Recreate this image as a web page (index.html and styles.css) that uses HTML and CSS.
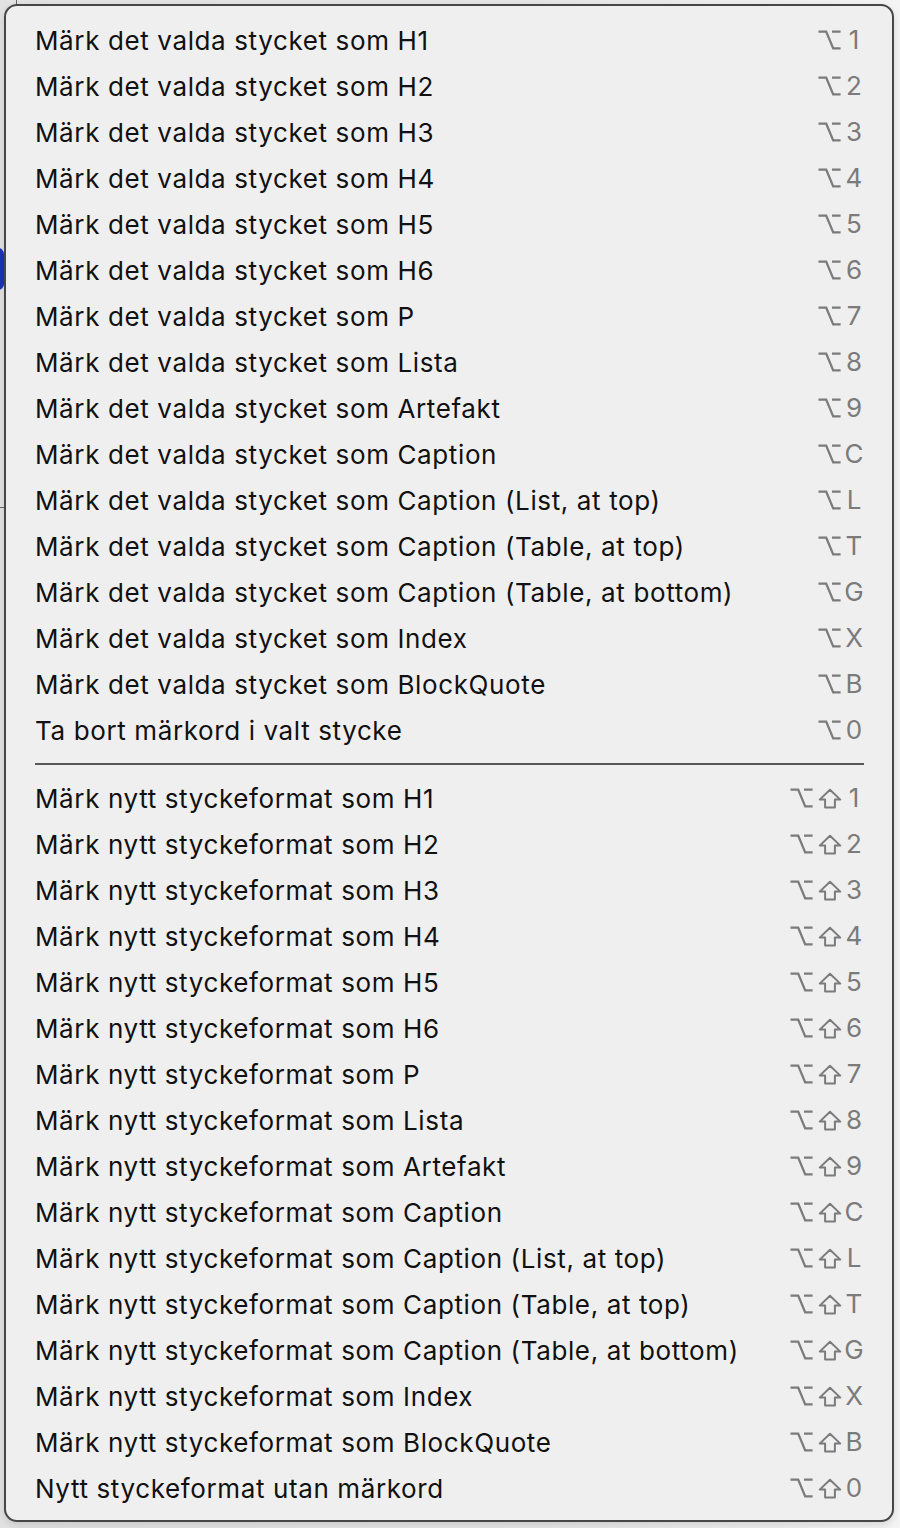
FILE: index.html
```html
<!DOCTYPE html>
<html lang="sv">
<head>
<meta charset="utf-8">
<title>Meny</title>
<link rel="stylesheet" href="styles.css">
</head>
<body>
<div class="backdrop">
  <span class="win-edge"></span>
  <span class="win-pill"></span>
  <span class="win-line"></span>
</div>
<div class="menu">
  <ul class="group" id="g1"></ul>
  <div class="sep"></div>
  <ul class="group" id="g2"></ul>
</div>
<template id="opt"><svg class="mod opt" viewBox="0 0 23 20" width="23" height="20"><path d="M0.5 1.6 H8.2 L15.2 18.4 H22.6 M14 1.6 H22.6" fill="none" stroke="currentColor" stroke-width="2.3"/></svg></template>
<template id="shift"><svg class="mod shift" viewBox="0 0 24 21" width="24" height="21"><path d="M12 1.8 L22.3 11.6 H16.9 V19.6 H7.1 V11.6 H1.7 Z" fill="none" stroke="currentColor" stroke-width="2" stroke-linejoin="round"/></svg></template>
<script>
const items1 = [
  ["Märk det valda stycket som H1","1"],
  ["Märk det valda stycket som H2","2"],
  ["Märk det valda stycket som H3","3"],
  ["Märk det valda stycket som H4","4"],
  ["Märk det valda stycket som H5","5"],
  ["Märk det valda stycket som H6","6"],
  ["Märk det valda stycket som P","7"],
  ["Märk det valda stycket som Lista","8"],
  ["Märk det valda stycket som Artefakt","9"],
  ["Märk det valda stycket som Caption","C"],
  ["Märk det valda stycket som Caption (List, at top)","L"],
  ["Märk det valda stycket som Caption (Table, at top)","T"],
  ["Märk det valda stycket som Caption (Table, at bottom)","G"],
  ["Märk det valda stycket som Index","X"],
  ["Märk det valda stycket som BlockQuote","B"],
  ["Ta bort märkord i valt stycke","0"]
];
const items2 = [
  ["Märk nytt styckeformat som H1","1"],
  ["Märk nytt styckeformat som H2","2"],
  ["Märk nytt styckeformat som H3","3"],
  ["Märk nytt styckeformat som H4","4"],
  ["Märk nytt styckeformat som H5","5"],
  ["Märk nytt styckeformat som H6","6"],
  ["Märk nytt styckeformat som P","7"],
  ["Märk nytt styckeformat som Lista","8"],
  ["Märk nytt styckeformat som Artefakt","9"],
  ["Märk nytt styckeformat som Caption","C"],
  ["Märk nytt styckeformat som Caption (List, at top)","L"],
  ["Märk nytt styckeformat som Caption (Table, at top)","T"],
  ["Märk nytt styckeformat som Caption (Table, at bottom)","G"],
  ["Märk nytt styckeformat som Index","X"],
  ["Märk nytt styckeformat som BlockQuote","B"],
  ["Nytt styckeformat utan märkord","0"]
];
const opt = document.getElementById('opt').innerHTML;
const shift = document.getElementById('shift').innerHTML;
function fill(id, items, withShift) {
  const ul = document.getElementById(id);
  ul.innerHTML = items.map(([label, key]) =>
    '<li class="item"><span class="label">' + label + '</span><span class="keys">' +
    opt + (withShift ? shift : '') + '<span class="key">' + key + '</span></span></li>'
  ).join('');
}
fill('g1', items1, false);
fill('g2', items2, true);
</script>
</body>
</html>
```
FILE: styles.css
```css
html, body {
  margin: 0;
  padding: 0;
}
body {
  background: linear-gradient(to right, #e2e2e2 0, #e6e6e6 60%, #f4f4f4 100%);
  width: 900px;
  height: 1528px;
  position: relative;
  overflow: hidden;
  font-family: Inter, "Noto Sans", sans-serif;
}
.backdrop .win-edge {
  position: absolute;
  left: 16px;
  top: 0;
  width: 1px;
  height: 6px;
  background: #666;
}
.backdrop .win-pill {
  position: absolute;
  left: -8px;
  top: 248px;
  width: 12px;
  height: 42px;
  border-radius: 8px;
  background: #1b34b4;
}
.backdrop .win-line {
  position: absolute;
  left: 0;
  top: 507px;
  width: 6px;
  height: 1px;
  background: #666;
}
.menu {
  position: absolute;
  left: 4px;
  top: 4px;
  width: 890px;
  height: 1518px;
  box-sizing: border-box;
  background: #efefef;
  border: 2px solid #474747;
  border-radius: 13px;
  padding: 11px 28px 0 27px;
  box-shadow: 0 3px 8px rgba(0,0,0,0.12);
}
.group {
  list-style: none;
  margin: 0;
  padding: 0;
}
.item {
  height: 46px;
  display: flex;
  align-items: center;
  justify-content: space-between;
}
.label {
  font-size: 26px;
  color: #111;
  letter-spacing: 0.62px;
  white-space: nowrap;
  padding-left: 2px;
}
.keys {
  display: flex;
  align-items: center;
  color: #7b7b7b;
}
.mod {
  display: block;
  flex: none;
}
.mod.opt {
  margin-right: 3px;
}
.mod.shift {
  margin-right: 2px;
  margin-left: 2px;
}
.key {
  width: 20px;
  font-size: 26px;
  line-height: 1;
  text-align: center;
  color: #7b7b7b;
}
.sep {
  height: 22px;
  display: flex;
  align-items: center;
}
.sep::before {
  content: "";
  display: block;
  width: 830px;
  margin-left: 2px;
  height: 2px;
  background: #595959;
}
```
